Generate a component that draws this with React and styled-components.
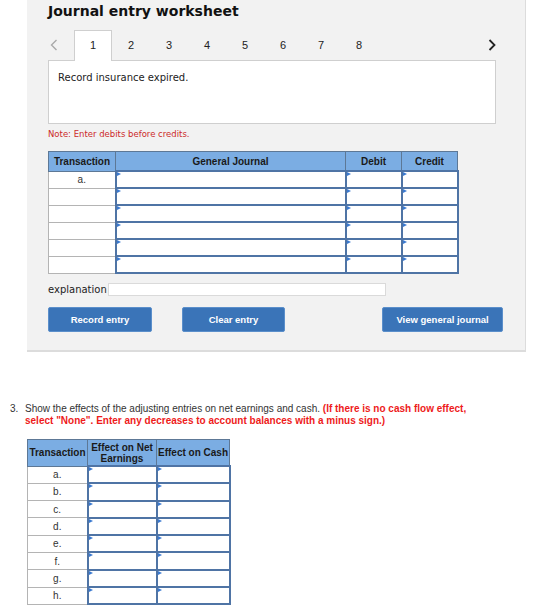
import React from 'react'
import styled, { createGlobalStyle } from 'styled-components'

const GlobalStyle = createGlobalStyle`
  body {
    margin: 0;
    background: #fff;
    font-family: "Liberation Sans", Arial, sans-serif;
    color: #222;
  }
`

const Page = styled.div`
  width: 560px;
  height: 605px;
  overflow: hidden;
`

const Panel = styled.div`
  margin-left: 27px;
  width: 499px;
  background: #f2f2f2;
  border-right: 1px solid #dcdcdc;
  border-bottom: 2px solid #dcdcdc;
  padding: 0 29px 18px 21px;
  box-sizing: border-box;
`

const Title = styled.h2`
  margin: 0;
  height: 22px;
  line-height: 22px;
  font-family: "DejaVu Sans", Verdana, sans-serif;
  font-size: 14px;
  font-weight: bold;
  color: #111;
`

const TabRow = styled.div`
  display: flex;
  align-items: flex-end;
  margin-top: 8px;
  height: 30px;
`

const Arrow = styled.div`
  display: flex;
  align-items: center;
  justify-content: ${p => p.$right ? 'flex-end' : 'flex-start'};
  width: 26px;
  height: 30px;
  padding-left: ${p => p.$right ? '0' : '2px'};
  box-sizing: border-box;
  margin-left: ${p => p.$right ? 'auto' : '0'};
`

const Tab = styled.div`
  width: 38px;
  height: 31px;
  margin-bottom: -1px;
  box-sizing: border-box;
  display: flex;
  justify-content: center;
  padding-top: 8px;
  font-size: 11px;
  color: #222;
  position: relative;
  z-index: 1;
  background: ${p => p.$active ? '#fff' : 'transparent'};
  border: 1px solid ${p => p.$active ? '#cfcfcf' : 'transparent'};
  border-bottom: none;
`

const Prompt = styled.div`
  height: 64px;
  box-sizing: border-box;
  background: #fff;
  border: 1px solid #cfcfcf;
  padding: 10px 9px;
  font-family: "DejaVu Sans", Verdana, sans-serif;
  font-size: 10px;
  line-height: 14px;
  color: #222;
`

const Note = styled.div`
  margin-top: 4px;
  line-height: 12px;
  font-family: "DejaVu Sans", Verdana, sans-serif;
  font-size: 8.5px;
  color: #cc2a2a;
`

const Grid = styled.table`
  border-collapse: collapse;
  table-layout: fixed;
  margin-top: ${p => p.$top}px;
  margin-left: ${p => p.$left || 0}px;
`

const Head = styled.th`
  background: #7badE3;
  border: 1px solid #5d7896;
  height: ${p => p.$h}px;
  padding: 0;
  font-size: 10px;
  font-weight: bold;
  line-height: 11px;
  color: #1a1a1a;
  text-align: center;
`

const Label = styled.td`
  height: ${p => p.$h}px;
  padding: 0;
  background: #fff;
  border: 1px solid #b4b4b4;
  font-size: 10px;
  text-align: center;
  color: #333;
  vertical-align: middle;
`

const Field = styled.td`
  height: ${p => p.$h}px;
  padding: 0;
  background: #fff;
  border: 2px solid #4f74a5;
  position: relative;

  &::before {
    content: '';
    position: absolute;
    top: 0;
    left: 0;
    border-top: 2.5px solid transparent;
    border-bottom: 2.5px solid transparent;
    border-left: 4px solid #3b7ad0;
  }
`

const ExplainRow = styled.div`
  display: flex;
  align-items: center;
  margin-top: 9px;
  height: 13px;
`

const ExplainLabel = styled.span`
  font-family: "DejaVu Sans", Verdana, sans-serif;
  font-size: 10px;
  color: #222;
  width: 60px;
`

const ExplainInput = styled.div`
  width: 278px;
  height: 13px;
  box-sizing: border-box;
  background: #fff;
  border: 1px solid #dadada;
`

const Buttons = styled.div`
  display: flex;
  margin-top: 11px;
`

const Button = styled.button`
  width: ${p => p.$w}px;
  height: 25px;
  margin-left: ${p => p.$gap || '0'};
  margin-right: ${p => p.$pull || '0'};
  background: #3a74b8;
  border: 1px solid #5b8fcb;
  border-radius: 2px;
  color: #fff;
  font-family: "Liberation Sans", Arial, sans-serif;
  font-size: 9.5px;
  font-weight: bold;
  padding: 0;
`

const Question = styled.div`
  display: flex;
  margin: 51px 0 0 10px;
  font-size: 10px;
  line-height: 12px;
  color: #333;
`

const Num = styled.span`
  width: 15px;
  flex-shrink: 0;
`

const QuestionText = styled.span`
  width: 448px;
`

const Warn = styled.span`
  color: #ee1b1b;
  font-weight: bold;
`

const ChevronLeft = () => (
  <svg width="8" height="12" viewBox="0 0 8 12">
    <polyline points="6.5,1 1.5,6 6.5,11" fill="none" stroke="#a9a9a9" strokeWidth="1.4" />
  </svg>
)

const ChevronRight = () => (
  <svg width="8" height="12" viewBox="0 0 8 12">
    <polyline points="1.5,1 6.5,6 1.5,11" fill="none" stroke="#222" strokeWidth="1.8" />
  </svg>
)

const tabs = [1, 2, 3, 4, 5, 6, 7, 8]
const journalRows = ['a.', '', '', '', '', '']
const effectRows = ['a.', 'b.', 'c.', 'd.', 'e.', 'f.', 'g.', 'h.']

export default function App() {
  return (
    <Page>
      <GlobalStyle />
      <Panel>
        <Title>Journal entry worksheet</Title>

        <TabRow>
          <Arrow><ChevronLeft /></Arrow>
          {tabs.map(n => (
            <Tab key={n} $active={n === 1}>{n}</Tab>
          ))}
          <Arrow $right><ChevronRight /></Arrow>
        </TabRow>

        <Prompt>Record insurance expired.</Prompt>
        <Note>Note: Enter debits before credits.</Note>

        <Grid $top={11}>
          <colgroup>
            <col style={{ width: 67 }} />
            <col style={{ width: 230 }} />
            <col style={{ width: 56 }} />
            <col style={{ width: 56 }} />
          </colgroup>
          <thead>
            <tr>
              <Head $h={18}>Transaction</Head>
              <Head $h={18}>General Journal</Head>
              <Head $h={18}>Debit</Head>
              <Head $h={18}>Credit</Head>
            </tr>
          </thead>
          <tbody>
            {journalRows.map((t, i) => (
              <tr key={i}>
                <Label $h={15}>{t}</Label>
                <Field $h={15} />
                <Field $h={15} />
                <Field $h={15} />
              </tr>
            ))}
          </tbody>
        </Grid>

        <ExplainRow>
          <ExplainLabel>explanation</ExplainLabel>
          <ExplainInput />
        </ExplainRow>

        <Buttons>
          <Button $w={104}>Record entry</Button>
          <Button $w={103} $gap="30px">Clear entry</Button>
          <Button $w={121} $gap="auto" $pull="-7px">View general journal</Button>
        </Buttons>
      </Panel>

      <Question>
        <Num>3.</Num>
        <QuestionText>
          Show the effects of the adjusting entries on net earnings and cash.{' '}
          <Warn>(If there is no cash flow effect, select "None". Enter any decreases to account balances with a minus sign.)</Warn>
        </QuestionText>
      </Question>

      <Grid $top={12} $left={27}>
        <colgroup>
          <col style={{ width: 60 }} />
          <col style={{ width: 69 }} />
          <col style={{ width: 73 }} />
        </colgroup>
        <thead>
          <tr>
            <Head $h={25}>Transaction</Head>
            <Head $h={25}>Effect on Net Earnings</Head>
            <Head $h={25}>Effect on Cash</Head>
          </tr>
        </thead>
        <tbody>
          {effectRows.map(t => (
            <tr key={t}>
              <Label $h={15.3}>{t}</Label>
              <Field $h={15.3} />
              <Field $h={15.3} />
            </tr>
          ))}
        </tbody>
      </Grid>
    </Page>
  )
}
